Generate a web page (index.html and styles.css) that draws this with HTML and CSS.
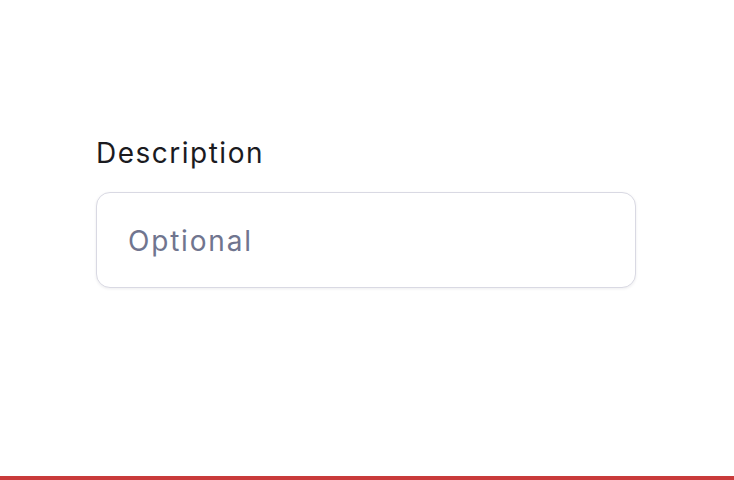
FILE: index.html
```html
<!DOCTYPE html>
<html>
<head>
<meta charset="utf-8">
<link rel="stylesheet" href="styles.css">
</head>
<body>
<div class="page">
  <div class="field">
    <label class="label" for="desc">Description</label>
    <input class="input" id="desc" type="text" placeholder="Optional">
  </div>
</div>
<div class="bar"></div>
</body>
</html>
```
FILE: styles.css
```css
html, body {
  margin: 0;
  padding: 0;
  background: #ffffff;
}
body {
  width: 734px;
  height: 480px;
  display: flex;
  flex-direction: column;
  font-family: "Inter", "Liberation Sans", sans-serif;
}
.page {
  flex: 1;
  padding: 133px 98px 0 96px;
}
.field {
  display: flex;
  flex-direction: column;
  gap: 19px;
  width: 540px;
}
.label {
  font-size: 28px;
  line-height: 40px;
  letter-spacing: 1.5px;
  color: #1b1b1f;
  font-weight: 400;
}
.input {
  box-sizing: border-box;
  height: 96px;
  width: 540px;
  border: 1px solid #d9d9e3;
  border-radius: 14px;
  padding: 2px 31px 0;
  font-family: inherit;
  font-size: 28px;
  letter-spacing: 1.8px;
  color: #1b1b1f;
  background: #fff;
  box-shadow: 0 1px 3px rgba(20, 20, 50, 0.08);
  outline: none;
}
.input::placeholder {
  color: #70758f;
}
.bar {
  height: 4px;
  background: #c93a3a;
}
```
